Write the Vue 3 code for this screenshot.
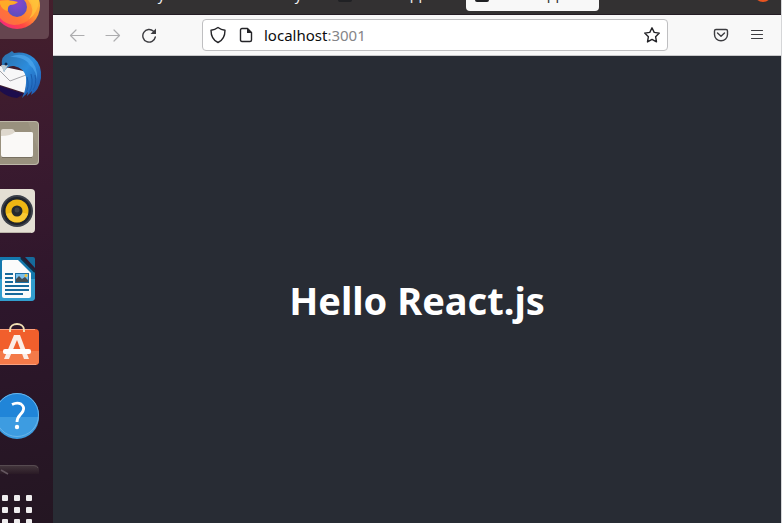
<script setup>
import { ref } from 'vue'

const address = ref('localhost:3001')
const dots = [0, 1, 2].flatMap((r) => [0, 1, 2].map((c) => ({ x: 2 + c * 12, y: 14 + r * 12, id: `${r}-${c}` })))
</script>

<template>
  <div class="desktop">
    <nav class="dock" aria-label="Dock">
      <button class="app first" aria-label="Firefox">
        <svg width="53" height="40" viewBox="0 0 53 40">
          <defs>
            <linearGradient id="fox" x1="1" y1="0" x2="0.1" y2="1">
              <stop offset="0" stop-color="#ffd83c" />
              <stop offset="0.45" stop-color="#ff9a30" />
              <stop offset="0.7" stop-color="#ff4545" />
              <stop offset="1" stop-color="#ee2090" />
            </linearGradient>
            <radialGradient id="globe" cx="0.5" cy="0.3" r="0.8">
              <stop offset="0" stop-color="#8a45d0" />
              <stop offset="1" stop-color="#5350b8" />
            </radialGradient>
          </defs>
          <path d="M0 0H49V34Q49 39 44 39H0Z" fill="#65454f" />
          <circle cx="17" cy="6" r="23" fill="url(#fox)" />
          <path d="M30 0Q36 8 31 17Q25 25 14 25Q5 24 0 18V0Z" fill="#ff8a32" opacity="0.65" />
          <circle cx="17" cy="7" r="10" fill="url(#globe)" />
          <path d="M0 1Q9 -1 18 2Q15 5 10 5Q7 7 8 11Q2 10 0 4Z" fill="#ffaa28" />
          <path d="M28 0Q36 10 29 19Q38 13 39 0Z" fill="#ffc83c" opacity="0.7" />
        </svg>
      </button>

      <button class="app" aria-label="Thunderbird">
        <svg width="53" height="68" viewBox="0 41 53 68">
          <defs>
            <linearGradient id="bird" x1="0" y1="0" x2="1" y2="1">
              <stop offset="0" stop-color="#2c6fa8" />
              <stop offset="0.5" stop-color="#2c8ddd" />
              <stop offset="1" stop-color="#1d4fa8" />
            </linearGradient>
          </defs>
          <path d="M0 86L24 94L17 98Q7 97 0 91Z" fill="#1c0d4c" />
          <path d="M0 66L28 72L25 93L0 85Z" fill="#f7f7f8" />
          <path d="M0 71L10 81L26 75" fill="none" stroke="#a4a4a9" stroke-width="1" />
          <path d="M2 66Q0 56 9 53L12 51L14 53Q25 51 34 58Q42 65 41 78Q39 91 31 95L32 91L27 96L28 92L22 98Q27 88 26 77Q24 68 14 66Q7 65 4 72Z" fill="url(#bird)" />
          <path d="M10 57Q29 56 34 73Q32 65 24 61Q35 66 37 79Q38 66 29 58Q21 52 10 57Z" fill="#51aaf0" opacity="0.65" />
          <path d="M27 77Q30 87 25 95M31 74Q34 85 29 93M35 75Q37 84 33 90" fill="none" stroke="#195cae" stroke-width="1" />
          <path d="M1 65L8 65L4 72Z" fill="#bdcbd2" />
          <circle cx="6" cy="64" r="1.5" fill="#11284c" />
        </svg>
      </button>

      <button class="app" aria-label="Files">
        <svg width="53" height="68" viewBox="0 109 53 68">
          <path d="M0 121H35Q39 121 39 125V161Q39 165 35 165H0Z" fill="#99917e" />
          <path d="M0 121.5H35Q38.5 121.5 38.5 125V161Q38.5 164.5 35 164.5H0" fill="none" stroke="#bdb7a8" />
          <path d="M28 122H36L38 125V150Z" fill="#aaa391" opacity="0.4" />
          <path d="M1 131Q1 129 3 129H12Q14 129 15 132H31Q33 132 33 134V155H1Z" fill="#ded8cd" />
          <path d="M1 136Q11 136 15 132H31Q33 132 33 134V155Q33 157 31 157H3Q1 157 1 155Z" fill="#faf9f7" />
          <path d="M2 157.5H32" stroke="#777061" />
        </svg>
      </button>

      <button class="app" aria-label="Rhythmbox">
        <svg width="53" height="68" viewBox="0 177 53 68">
          <path d="M0 189H31Q35 189 35 193V229Q35 233 31 233H0Z" fill="#e4dfd4" />
          <path d="M0 232.5H31" stroke="#bcb6aa" />
          <circle cx="17" cy="211" r="16" fill="#3c4049" />
          <circle cx="17" cy="211" r="14" fill="#20242c" />
          <circle cx="17" cy="211" r="11.5" fill="#eeb713" />
          <path d="M6 214A11.5 11.5 0 0 0 28 214L17 211Z" fill="#ffd34a" opacity="0.6" />
          <circle cx="17" cy="211" r="5.5" fill="#252a2d" />
          <circle cx="17" cy="210" r="2.5" fill="#3f4343" />
        </svg>
      </button>

      <button class="app" aria-label="LibreOffice Writer">
        <svg width="53" height="68" viewBox="0 245 53 68">
          <path d="M0 257H20L35 271V297Q35 301 31 301H0Z" fill="#1478ad" />
          <path d="M0 279H35V297Q35 301 31 301H0Z" fill="#329dce" />
          <path d="M25 257H33Q35 257 35 259V268Z" fill="#166b9c" />
          <path d="M21 258L35 272" stroke="#102b42" stroke-width="2" />
          <path d="M2 261Q2 260 4 260H18L31 273V296Q31 298 29 298H4Q2 298 2 296Z" fill="#fbfbfb" />
          <path d="M5 274H13M5 278H13M5 282H13M5 286H29M5 290H29M5 294H23" stroke="#17699b" stroke-width="2" />
          <path d="M15 273H29V283H15Z" fill="#1c70a4" />
          <path d="M16 274H28V282H16Z" fill="#79bfec" />
          <path d="M16 282V279L19 276L22 279L25 277L28 280V282Z" fill="#444d50" />
          <circle cx="26" cy="275.5" r="1.5" fill="#f3c333" />
        </svg>
      </button>

      <button class="app" aria-label="Software">
        <svg width="53" height="68" viewBox="0 313 53 68">
          <path d="M0 329H35Q39 329 39 333V361Q39 365 35 365H0Z" fill="#f15f2c" />
          <path d="M0 351H39V361Q39 365 35 365H0Z" fill="#f47a49" />
          <path d="M0 329.5H35M0 364.5H36" stroke="#f9a17f" />
          <path d="M10 332V330C10 322 24 322 24 330V332" fill="none" stroke="#f2dfb4" stroke-width="2" />
          <path d="M4 359L14 335H20L29 359H24L17 340L9 359Z" fill="#fbede6" />
          <rect x="3" y="349" width="28" height="5" rx="2" fill="#fff" />
        </svg>
      </button>

      <button class="app" aria-label="Help">
        <svg width="53" height="68" viewBox="0 381 53 68">
          <circle cx="17" cy="415" r="22" fill="#2085d8" />
          <path d="M-5 417H39A22 22 0 0 1 -5 417Z" fill="#3d9ce1" />
          <circle cx="17" cy="415" r="21.5" fill="none" stroke="#69b5ea" />
          <path d="M12 404.5Q17 402 21 404Q25 407 23 411C21 415 17 416 17 422" fill="none" stroke="#fff" stroke-width="2.8" />
          <circle cx="17" cy="427" r="2.2" fill="#fff" />
        </svg>
      </button>

      <button class="app" aria-label="Terminal">
        <svg width="53" height="32" viewBox="0 449 53 32">
          <defs>
            <linearGradient id="term" x1="0" y1="0" x2="0" y2="1">
              <stop offset="0" stop-color="#45383e" />
              <stop offset="1" stop-color="#2a1a25" />
            </linearGradient>
          </defs>
          <path d="M0 465H34Q39 465 39 470V474H0Z" fill="url(#term)" />
          <path d="M0 465.5H34Q37 466 38 468" fill="none" stroke="#564a50" />
          <path d="M1 470L8 474" stroke="#655760" stroke-width="1.5" />
        </svg>
      </button>

      <button class="app grid" aria-label="Show Applications">
        <svg width="53" height="44" viewBox="0 0 53 44">
          <rect v-for="d in dots" :key="d.id" :x="d.x" :y="d.y" width="6" height="6" rx="1" fill="#efedee" />
        </svg>
      </button>
    </nav>

    <div class="browser">
      <header class="tabs">
        <div class="tab one">y</div>
        <div class="tab two">y</div>
        <div class="tab three"><i class="favicon"></i>React App</div>
        <div class="tab current"><i class="favicon"></i>React App</div>
        <button class="close" aria-label="Close window"></button>
      </header>

      <div class="toolbar">
        <div class="history">
          <button class="tool faint" aria-label="Back">
            <svg width="16" height="16" viewBox="0 0 16 16"><path d="M15 8.5H2M7 3L1.5 8.5L7 14" /></svg>
          </button>
          <button class="tool faint" aria-label="Forward">
            <svg width="16" height="16" viewBox="0 0 16 16"><path d="M1 8.5H14M9 3L14.5 8.5L9 14" /></svg>
          </button>
          <button class="tool" aria-label="Reload">
            <svg width="16" height="16" viewBox="0 0 16 16">
              <path class="medium" d="M14.300 10A6.300 6.300 0 1 1 12.500 4.300" />
              <path class="solid" d="M15 1.500V7H9.500Z" />
            </svg>
          </button>
        </div>

        <div class="address">
          <svg class="dark" width="16" height="18" viewBox="0 0 16 18">
            <path d="M8 1.5C10 3 12 3.9 15 4.2C15 9.5 13.5 14 8 16.5C2.5 14 1 9.5 1 4.2C4 3.9 6 3 8 1.5Z" />
          </svg>
          <svg class="dark page" width="14" height="16" viewBox="0 0 14 16">
            <path d="M3 1.5H8.5L12.5 5.5V13Q12.5 14.5 11 14.5H3Q1.5 14.5 1.5 13V3Q1.5 1.5 3 1.5Z" />
            <path class="solid" d="M8 1L13 6H8Z" />
          </svg>
          <label class="location">
            <span class="shown" aria-hidden="true">localhost<span class="port">:3001</span></span>
            <input v-model="address" type="text" aria-label="Address" />
          </label>
          <button class="star" aria-label="Bookmark this page">
            <svg class="dark" width="18" height="18" viewBox="0 0 18 18">
              <path d="M9 1.800L11.200 6.400L16.300 7.100L12.600 10.700L13.500 15.900L9 13.400L4.500 15.900L5.400 10.700L1.700 7.100L6.800 6.400Z" />
            </svg>
          </button>
        </div>

        <div class="extras">
          <button class="tool" aria-label="Save to Pocket">
            <svg width="16" height="16" viewBox="0 0 16 16">
              <path class="medium" d="M3 2.5H13Q14.5 2.5 14.5 4V7.5A6.5 6.3 0 0 1 1.5 7.5V4Q1.5 2.5 3 2.5ZM4.500 6L8 9.300L11.500 6" />
            </svg>
          </button>
          <button class="tool" aria-label="Menu">
            <svg width="16" height="16" viewBox="0 0 16 16"><path d="M2.5 3.5H13.5M2.5 7.5H13.5M2.5 11.5H13.5" /></svg>
          </button>
        </div>
      </div>

      <main class="page-body">
        <h1>Hello React.js</h1>
      </main>
    </div>
  </div>
</template>

<style>
body {
  margin: 0;
}
</style>

<style scoped>
.desktop {
  display: flex;
  height: 100vh;
  overflow: hidden;
  font-family: "Noto Sans", "Open Sans", sans-serif;
}
button {
  padding: 0;
  border: 0;
  background: none;
}
svg {
  display: block;
  flex: none;
}
.dock {
  display: flex;
  flex-direction: column;
  flex: none;
  width: 53px;
  overflow: hidden;
  background: linear-gradient(170deg, #451f2c 0%, #3a1a2f 30%, #2d162b 58%, #241622 100%);
}
.app {
  flex: none;
}
.first {
  margin-bottom: 1px;
}
.browser {
  display: flex;
  flex-direction: column;
  flex: 1;
  min-width: 0;
  border-right: 1px solid #d5d6d8;
}
.tabs {
  display: flex;
  align-items: flex-end;
  flex: none;
  box-sizing: border-box;
  height: 15px;
  overflow: hidden;
  background: #333132;
  border-bottom: 1px solid #241c24;
  color: #f2f2f2;
  font-size: 14px;
}
.tab {
  display: flex;
  align-items: flex-end;
  gap: 9px;
  box-sizing: border-box;
  flex: none;
  height: 32px;
  padding: 0 11px 11px;
  line-height: 16px;
}
.one,
.two {
  width: 137px;
  justify-content: flex-end;
  padding-right: 25px;
}
.three {
  width: 139px;
  padding-bottom: 12px;
}
.favicon {
  width: 14px;
  height: 16px;
  border-radius: 2px;
  background: #202124;
}
.current {
  width: 133px;
  height: 29px;
  margin-bottom: 3px;
  padding: 0 9px 9px;
  border-radius: 4px;
  background: #f8f8f8;
  color: #333;
}
.close {
  width: 18px;
  height: 18px;
  margin: 0 9px 12px auto;
  border-radius: 50%;
  background: #e95420;
}
.toolbar {
  display: flex;
  align-items: center;
  flex: none;
  box-sizing: border-box;
  height: 41px;
  padding: 0 16px;
  background: #f8f8f8;
  border-bottom: 1px solid #c9c9cb;
}
.history,
.extras {
  display: flex;
  gap: 20px;
}
.tool svg {
  fill: none;
  stroke: #3c3c40;
  stroke-width: 1.2;
  stroke-linecap: round;
  stroke-linejoin: round;
}
.faint svg {
  stroke: #adadaf;
}
.medium {
  stroke-width: 1.4;
}
.tool .solid {
  fill: #3c3c40;
  stroke: none;
}
.address {
  display: flex;
  align-items: center;
  flex: 1;
  box-sizing: border-box;
  height: 32px;
  min-width: 0;
  margin: 0 45px;
  padding: 0 6px 0 7px;
  border: 1px solid #bfbfc1;
  border-radius: 4px;
  background: #fff;
}
.dark {
  fill: none;
  stroke: #242428;
  stroke-width: 1.4;
  stroke-linejoin: round;
}
.dark .solid {
  fill: #242428;
  stroke: none;
}
.page {
  margin-left: 13px;
}
.location {
  display: grid;
  flex: 1;
  min-width: 0;
  margin-left: 11px;
  font-size: 15px;
  line-height: 20px;
}
.shown,
.location input {
  grid-area: 1 / 1;
}
.shown {
  color: #0c0c0d;
}
.port {
  color: #858587;
}
.location input {
  width: 100%;
  padding: 0;
  border: 0;
  outline: 0;
  background: transparent;
  color: transparent;
  caret-color: #0c0c0d;
  font: inherit;
}
.page-body {
  display: flex;
  align-items: center;
  justify-content: center;
  flex: 1;
  min-height: 0;
  padding-top: 20px;
  background: #282c34;
}
h1 {
  margin: 0;
  color: #fff;
  font-size: 38px;
  line-height: 48px;
  font-weight: 700;
}
</style>
